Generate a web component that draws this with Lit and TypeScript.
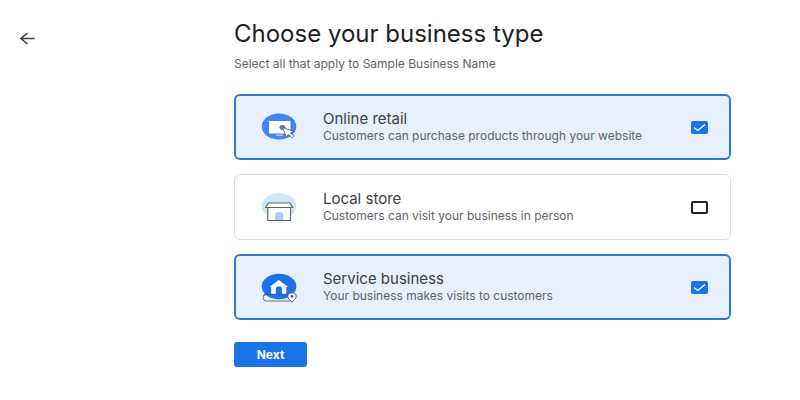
import { LitElement, css, html, svg, TemplateResult } from "lit";
import { customElement, state } from "lit/decorators.js";
import { classMap } from "lit/directives/class-map.js";

interface BusinessType {
  id: string;
  title: string;
  description: string;
  icon: TemplateResult;
}

const onlineIcon = svg`
  <ellipse cx="18" cy="15.5" rx="17.3" ry="13" fill="#4285f4"/>
  <rect x="7.5" y="9.5" width="22.5" height="13.5" rx="0.8" fill="#fff" stroke="#4a6aa8" stroke-width="0.8"/>
  <path d="M15 24.2h7" stroke="#d6c8d4" stroke-width="1.4"/>
  <ellipse cx="21.5" cy="16.5" rx="2.6" ry="2.1" fill="#4285f4" stroke="#3f5f9c" stroke-width="0.8"/>
  <path d="M21.5 16.7l11.4 3.6-3.6 1.7 4.2 3-2.2 1.7-4.3-3.2-1.6 2.6z" fill="#fff" stroke="#4a5568" stroke-width="0.8" stroke-linejoin="round"/>`;

const storeIcon = svg`
  <ellipse cx="18" cy="15" rx="17.3" ry="12.8" fill="#d2e3fc"/>
  <path d="M6.8 16v13.5h22.7V16" fill="#fff" stroke="#5f6673" stroke-width="1.2"/>
  <path d="M14 29v-4.5a4.2 3.6 0 0 1 8.4 0V29z" fill="#aecbfa"/>
  <path d="M7.5 12h21.3l3 4.5h-27.3z" fill="#fff" stroke="#5f6673" stroke-width="1.2" stroke-linejoin="round"/>`;

const serviceIcon = svg`
  <rect x="2" y="23" width="30" height="7" rx="3.5" fill="#e8f0fe" stroke="#66738c" stroke-width="1"/>
  <ellipse cx="18" cy="15.5" rx="17.3" ry="12.8" fill="#1a73e8"/>
  <path d="M8.5 16l9.3-7 9.3 7h-1.8v7H10.2v-7z" fill="#fff"/>
  <path d="M14.8 23v-5a3.1 2.8 0 0 1 6.2 0v5z" fill="#1a73e8"/>
  <path d="M2.5 25.5q.8-2.2 4-2.2h22" fill="none" stroke="#3c5a91" stroke-width="0.9"/>
  <path d="M31 31.2c-1.2-1.8-4.2-3.3-4.2-5.8a4.2 3.6 0 0 1 8.4 0c0 2.5-3 4-4.2 5.8z" fill="#fff" stroke="#4a5568" stroke-width="1"/>
  <circle cx="31" cy="25.3" r="1.4" fill="#3c4a66"/>`;

const businessTypes: BusinessType[] = [
  {
    id: "online",
    title: "Online retail",
    description: "Customers can purchase products through your website",
    icon: onlineIcon,
  },
  {
    id: "local",
    title: "Local store",
    description: "Customers can visit your business in person",
    icon: storeIcon,
  },
  {
    id: "service",
    title: "Service business",
    description: "Your business makes visits to customers",
    icon: serviceIcon,
  },
];

@customElement("app-root")
export class AppRoot extends LitElement {
  @state() private selected = new Set<string>(["online", "service"]);

  static styles = css`
    :host {
      display: block;
      min-height: 100vh;
      box-sizing: border-box;
      background: #fff;
      color: #202124;
      font-family: Inter, "Liberation Sans", sans-serif;
    }
    .page {
      display: grid;
      grid-template-columns: 214px minmax(0, 497px);
      padding: 20px;
    }
    .back {
      justify-self: start;
      align-self: start;
      display: flex;
      margin-top: 12px;
      padding: 0;
      border: 0;
      background: none;
      cursor: pointer;
    }
    .heading {
      margin: 0;
      font-size: 24px;
      line-height: 28px;
      font-weight: 400;
    }
    .hint {
      margin: 8px 0 0;
      font-size: 12px;
      line-height: 16px;
      color: #5f6368;
    }
    .options {
      display: grid;
      gap: 14px;
      margin: 22px 0;
    }
    .card {
      display: flex;
      align-items: center;
      box-sizing: border-box;
      min-height: 66px;
      padding: 4px 22px 4px 26px;
      border: 1px solid #dadce0;
      border-radius: 6px;
      cursor: pointer;
    }
    .card.selected {
      padding: 3px 21px 3px 25px;
      border: 2px solid #3077cf;
      background: #e8f0fe;
    }
    .art {
      flex: none;
      margin-right: 26px;
    }
    .copy {
      flex: 1;
      min-width: 0;
      padding-bottom: 2px;
    }
    .name,
    .description {
      display: block;
    }
    .name {
      font-size: 15px;
      line-height: 18px;
      color: #3c4043;
    }
    .description {
      font-size: 12px;
      line-height: 15px;
      color: #5f6368;
    }
    .check {
      display: grid;
      flex: none;
    }
    .box,
    .tick {
      grid-area: 1 / 1;
      width: 17px;
      height: 13px;
    }
    .box {
      appearance: none;
      box-sizing: border-box;
      margin: 0;
      border: 2px solid #202124;
      border-radius: 2px;
      cursor: pointer;
    }
    .box:checked {
      border-color: #1a73e8;
      background: #1a73e8;
    }
    .tick {
      z-index: 1;
      pointer-events: none;
    }
    .next {
      display: block;
      width: 73px;
      height: 25px;
      padding: 0;
      border: 0;
      border-radius: 3px;
      background: #1a73e8;
      color: #fff;
      font-family: inherit;
      font-size: 12px;
      font-weight: 700;
      cursor: pointer;
    }
  `;

  private toggle(id: string) {
    const next = new Set(this.selected);
    if (!next.delete(id)) next.add(id);
    this.selected = next;
  }

  private renderCard(type: BusinessType) {
    const checked = this.selected.has(type.id);
    return html`
      <label class=${classMap({ card: true, selected: checked })} for=${type.id}>
        <svg class="art" width="36" height="32" viewBox="0 0 36 32" aria-hidden="true">${type.icon}</svg>
        <span class="copy">
          <span class="name">${type.title}</span>
          <span class="description">${type.description}</span>
        </span>
        <span class="check">
          <input
            class="box"
            type="checkbox"
            id=${type.id}
            .checked=${checked}
            @change=${() => this.toggle(type.id)}
          />
          ${checked
            ? html`<svg class="tick" viewBox="0 0 17 13" aria-hidden="true">
                <path d="M3 6.5l3.7 3L14 3.6" fill="none" stroke="#fff" stroke-width="1.3" />
              </svg>`
            : null}
        </span>
      </label>
    `;
  }

  render() {
    return html`
      <main class="page">
        <button class="back" type="button" aria-label="Back">
          <svg width="15" height="13" viewBox="0 0 15 13" aria-hidden="true">
            <path d="M14.5 6.5H1M7.5 1L1 6.5l6.5 5.5" fill="none" stroke="#3c4043" stroke-width="1.6" />
          </svg>
        </button>
        <section>
          <h1 class="heading">Choose your business type</h1>
          <p class="hint">Select all that apply to Sample Business Name</p>
          <div class="options">${businessTypes.map((type) => this.renderCard(type))}</div>
          <button class="next" type="button">Next</button>
        </section>
      </main>
    `;
  }
}
